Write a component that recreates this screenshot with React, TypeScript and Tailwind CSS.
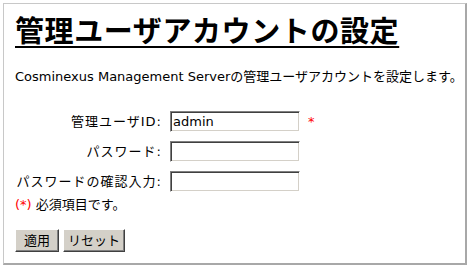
import React from "react";

const jp = { fontFamily: '"DejaVu Sans", "Noto Sans CJK JP", sans-serif' };

function Field({ label, value, required }: { label: string; value?: string; required?: boolean }) {
  return (
    <>
      <div className="text-right text-[13px] leading-[21px] tracking-[1px] text-black">{label}</div>
      <input
        readOnly
        value={value ?? ""}
        className="h-[21px] w-[130px] bg-white border border-t-[#808080] border-l-[#808080] border-b-white border-r-white shadow-[inset_1px_1px_0_#404040,inset_-1px_-1px_0_#d4d0c8] px-[2px] text-[13px] text-black outline-none"
        style={jp}
      />
      <div className="text-[13px] leading-[21px] text-[#ff0000]">{required ? "*" : ""}</div>
    </>
  );
}

export default function App() {
  return (
    <div className="w-[471px] h-[267px] bg-white p-[3px]" style={jp}>
      <div className="w-[464px] h-[262px] border-t border-l border-t-[#c8c8c8] border-l-[#c8c8c8] border-r-2 border-b-2 border-r-[#a8a8a8] border-b-[#a8a8a8] pl-[11px] flex flex-col">
        <h1
          className="mt-[7px] text-[29px] leading-[36px] font-bold tracking-[0.6px] text-black underline underline-offset-[4px] decoration-[2px] self-start"
          style={{ fontFamily: '"Noto Sans CJK JP", sans-serif' }}
        >
          管理ユーザアカウントの設定
        </h1>
        <p className="mt-[21px] text-[13px] leading-[18px] text-black">
          Cosminexus Management Serverの管理ユーザアカウントを設定します。
        </p>
        <div className="mt-[25px] grid grid-cols-[147px_130px_auto] gap-x-[8px] gap-y-[9px] items-center">
          <Field label="管理ユーザID:" value="admin" required />
          <Field label="パスワード:" />
          <Field label="パスワードの確認入力:" />
        </div>
        <p className="mt-[4px] text-[13px] leading-[18px] text-black">
          <span className="text-[#ff0000]">(*)</span> 必須項目です。
        </p>
        <div className="mt-[15px] flex gap-[4px]">
          <button className="h-[23px] w-[44px] bg-[#d4d0c8] border border-t-white border-l-white border-b-[#404040] border-r-[#404040] shadow-[inset_-1px_-1px_0_#808080] text-[13px] text-black" style={jp}>
            適用
          </button>
          <button className="h-[23px] w-[62px] bg-[#d4d0c8] border border-t-white border-l-white border-b-[#404040] border-r-[#404040] shadow-[inset_-1px_-1px_0_#808080] text-[13px] text-black" style={jp}>
            リセット
          </button>
        </div>
      </div>
    </div>
  );
}
